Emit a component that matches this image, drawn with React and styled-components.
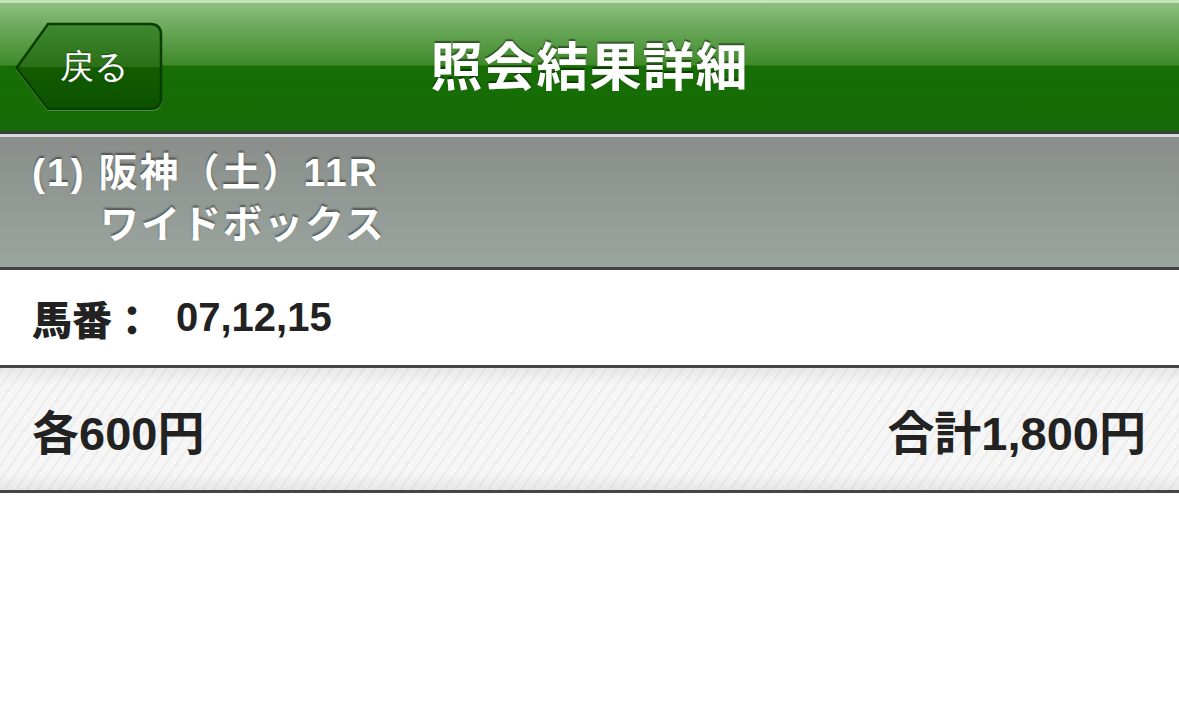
import React from 'react';
import styled, { createGlobalStyle } from 'styled-components';

const GlobalStyle = createGlobalStyle`
html, body {
  margin: 0;
  padding: 0;
  background: #ffffff;
}
body {
  font-family: "Liberation Sans", Arial, "Noto Sans CJK JP", sans-serif;
}
`

const Page = styled.div`
width: 1179px;
min-height: 711px;
background: #fff;
`

const Header = styled.header`
height: 128px;
position: relative;
display: flex;
align-items: center;
justify-content: center;
border-top: 3px solid #c4e4b8;
background: linear-gradient(to bottom, #8dbf80 0%, #6aa85a 40%, #3f8a2a 98%, #1a7200 100%) top / 100% 63px no-repeat,
  linear-gradient(to bottom, #197300 0%, #166a08 100%);
border-bottom: 3px solid #3a3f3a;
box-shadow: 0 3px 0 #d8dcd8;
`

const Title = styled.h1`
margin: 0 0 8px;
font-size: 52px;
font-weight: bold;
color: #fff;
letter-spacing: 1px;
text-shadow: 0 -2px 1px rgba(0,0,0,0.45);
`

const BackButton = styled.button`
position: absolute;
left: 15px;
top: 18px;
width: 148px;
height: 90px;
padding: 0;
border: none;
background: none;
cursor: pointer;
text-align: left;

svg {
  position: absolute;
  inset: 0;
}

span {
  position: relative;
  display: block;
  padding-left: 45px;
  font-size: 34px;
  color: #fff;
  line-height: 90px;
  text-shadow: 0 -1px 1px rgba(0,0,0,0.4);
}
`

const RaceBand = styled.section`
margin-top: 3px;
height: 133px;
box-sizing: border-box;
padding: 12px 32px 0;
background: linear-gradient(to bottom, #8a8e8b 0%, #9aa59e 100%);
border-bottom: 3px solid #444644;
color: #fff;
font-size: 39px;
font-weight: bold;
text-shadow: 0 -2px 2px rgba(0,0,0,0.45);
`

const RaceLine = styled.div`
line-height: 48px;
padding-left: ${p => p.$indent || 0}px;
margin-top: ${p => p.$gap || 0}px;
letter-spacing: ${p => p.$spread || 0}px;
`

const NumberRow = styled.div`
height: 95px;
display: flex;
align-items: center;
padding: 0 32px;
border-bottom: 3px solid #444644;
font-size: 40px;
font-weight: bold;
color: #222;

b {
  margin-right: 24px;
}
`

const AmountRow = styled.div`
height: 125px;
box-sizing: border-box;
display: flex;
align-items: center;
justify-content: space-between;
padding: 0 33px 0 32px;
border-bottom: 3px solid #444644;
font-size: 47px;
font-weight: bold;
color: #222;
background:
  linear-gradient(to bottom, rgba(0,0,0,0.06), rgba(0,0,0,0) 14%, rgba(0,0,0,0) 86%, rgba(0,0,0,0.06)),
  repeating-linear-gradient(-55deg, #f6f6f6 0px, #f6f6f6 7px, #ececec 7px, #ececec 9px);
`

const BackShape = () => (
  <svg width="148" height="90" viewBox="0 0 148 90">
    <defs>
      <linearGradient id="bk" x1="0" y1="0" x2="0" y2="1">
        <stop offset="0" stopColor="#3f8a30" />
        <stop offset="0.5" stopColor="#2a7018" />
        <stop offset="0.51" stopColor="#145c00" />
        <stop offset="1" stopColor="#0a5200" />
      </linearGradient>
    </defs>
    <path d="M1.5 48 L33 4.5 H135 Q146 4.5 146 15 V79 Q146 89 135 89 H33 Z"
      fill="none" stroke="#5ea84c" strokeWidth="2" />
    <path d="M1.5 47 L33 3 H135 Q146 3 146 14 V77 Q146 88 135 88 H33 Z"
      fill="url(#bk)" stroke="#0b3d00" strokeWidth="2.5" />
  </svg>
)

const App = () => {
  return (
    <Page>
      <GlobalStyle />
      <Header>
        <BackButton>
          <BackShape />
          <span>戻る</span>
        </BackButton>
        <Title>照会結果詳細</Title>
      </Header>
      <RaceBand>
        <RaceLine $spread={2}>(1) 阪神（土）11R</RaceLine>
        <RaceLine $indent={68} $gap={4} $spread={2}>ワイドボックス</RaceLine>
      </RaceBand>
      <NumberRow>
        <b>馬番：</b>
        <span>07,12,15</span>
      </NumberRow>
      <AmountRow>
        <span>各600円</span>
        <span>合計1,800円</span>
      </AmountRow>
    </Page>
  )
}

export default App
